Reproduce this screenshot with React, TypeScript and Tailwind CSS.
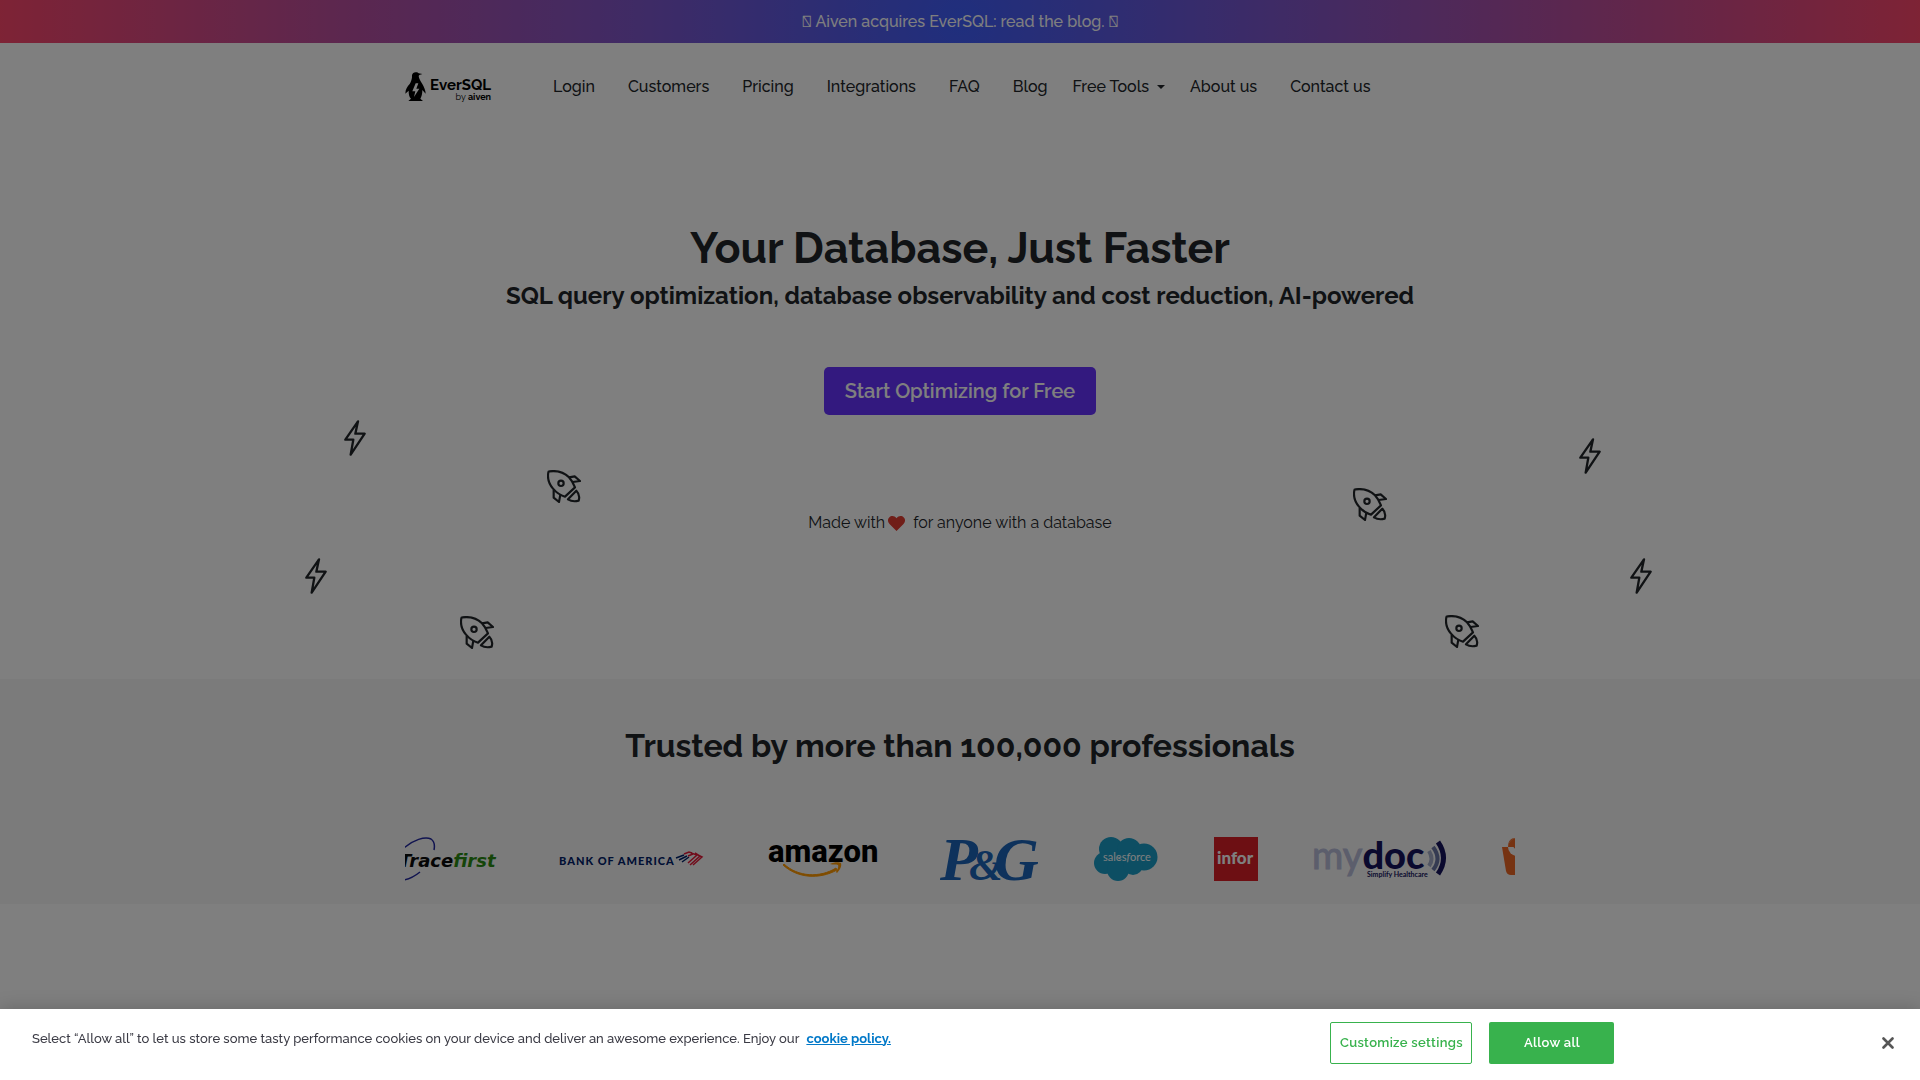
import type { ReactNode } from "react";

function NavItem({ children }: { children: ReactNode }) {
  return (
    <li>
      <a href="#" className="block px-4 py-2">
        {children}
      </a>
    </li>
  );
}

function EverSqlLogo() {
  return (
    <a href="#" aria-label="EverSQL by aiven" className="flex w-[86px] items-center justify-between text-black">
      <svg viewBox="0 0 63 87" className="h-[29px] w-[21px]">
        <path
          fill="#000"
          d="M21 10C22 3 28 0 34 1c4 0 6 2 7 3l11 2c-6 2-10 3-11 6 1 8 5 14 11 24 4 8 10 18 10 29L52 54c0 12-2 20-6 26l8 7H10l8-7c-6-6-7-14-7-24L1 65C1 52 8 42 14 36c4-6 8-16 7-26Z"
        />
        <path fill="#fff" d="M32 34 22 58h9l-4 17 16-25h-9l6-16Z" />
      </svg>
      <span className="mt-[6px] flex flex-col items-end">
        <span className="text-[15px] leading-4 font-bold">EverSQL</span>
        <span className="text-[9px] leading-[9px]">
          by <b>aiven</b>
        </span>
      </span>
    </a>
  );
}

function Bolt({ place }: { place: string }) {
  return (
    <svg viewBox="0 0 66 108" className={`absolute h-9 w-[22px] ${place}`} aria-hidden="true">
      <path d="M42 4 4 59h24l-8 45 42-63H34Z" fill="none" stroke="#212529" strokeWidth="7" strokeLinejoin="round" />
    </svg>
  );
}

function Rocket({ place }: { place: string }) {
  return (
    <svg viewBox="0 0 102 99" className={`absolute h-[33px] w-[34px] ${place}`} aria-hidden="true">
      <g fill="none" stroke="#212529" strokeWidth="6.500" strokeLinejoin="round">
        <path d="M7 4c23-3 45 4 59 18 8 9 14 20 18 30L54 80C40 76 28 68 18 56 6 42 1 23 4 7q0-3 3-3Z" />
        <circle cx="42" cy="40" r="8" />
        <path d="m66 22 17-3 16 14-22 3M20 60v23l16 13 4-22" />
        <path d="M88 62c8 8 10 20 7 30-11 3-23 2-32-4Z" />
      </g>
    </svg>
  );
}

function TraceFirst() {
  return (
    <svg viewBox="0 0 96 44" className="h-11 w-24 shrink-0 overflow-visible" role="img" aria-label="TraceFirst">
      <path d="M-1 11C8 3 20-1 26 2c3 2 4 6 3 11M-1 43c6-1 11-4 16-8" fill="none" stroke="#2228a0" strokeWidth="1.500" />
      <text x="-6" y="30" className="font-['DejaVu_Sans',sans-serif] text-[18px] font-bold italic" fill="#0a0a0a">
        Trace<tspan fill="#2a8a12">first</tspan>
      </text>
    </svg>
  );
}

function BankOfAmerica() {
  return (
    <svg viewBox="0 0 155 44" className="h-11 w-[155px] shrink-0" role="img" aria-label="Bank of America">
      <text x="2" y="28" className="font-['Lato',sans-serif] text-[11px] font-black tracking-[1px]" fill="#012169">
        BANK OF AMERICA
      </text>
      <g fill="none" strokeWidth="1.500">
        <path d="m119 21 8-3M122 23l8-4M125 25l7-5" stroke="#012169" />
        <path d="m127 17 5-2 3 1M131 19l5-2" stroke="#e31837" />
        <path d="m134 16 6 2-9 8M138 16l5 3-10 9M141 18l4 2-9 8" stroke="#e31837" />
      </g>
    </svg>
  );
}

function Amazon() {
  return (
    <svg viewBox="0 0 114 44" className="h-11 w-[114px] shrink-0 overflow-visible" role="img" aria-label="amazon">
      <text x="0" y="25" className="font-['Roboto',sans-serif] text-[31px] font-extrabold" fill="#000">
        amazon
      </text>
      <path d="M16 27c14 13 36 14 52 4l1 2c-18 10-40 8-54-5Z" fill="#f90" stroke="#f90" />
      <path d="M62 27c4-2 9-2 11-1 1 3-1 7-4 10l-1-1c1-2 3-5 2-7-2-1-5 0-8-1Z" fill="#f90" />
    </svg>
  );
}

function ProcterGamble() {
  return (
    <svg viewBox="0 0 100 44" className="h-11 w-[100px] shrink-0 overflow-visible" role="img" aria-label="P&G">
      <text x="2" y="43" className="font-['Liberation_Serif',serif] text-[62px] font-bold italic" fill="#1c64b8">
        P
        <tspan dx="-9" className="text-[44px]">
          &amp;
        </tspan>
        <tspan dx="-9">G</tspan>
      </text>
    </svg>
  );
}

function Salesforce() {
  return (
    <svg viewBox="0 0 64 44" className="h-11 w-16 shrink-0" role="img" aria-label="salesforce">
      <g fill="#1a9cc6">
        <circle cx="17" cy="12" r="12" />
        <circle cx="35" cy="13" r="12" />
        <circle cx="50" cy="20" r="13.500" />
        <circle cx="11" cy="26" r="11" />
        <circle cx="24" cy="33" r="11" />
        <circle cx="39" cy="28" r="10" />
      </g>
      <text x="9" y="24" className="font-['Lato',sans-serif] text-[11px]" fill="#fff">
        sales<tspan fontStyle="italic">f</tspan>orce
      </text>
    </svg>
  );
}

function Infor() {
  return (
    <svg viewBox="0 0 44 44" className="size-11 shrink-0" role="img" aria-label="infor">
      <path d="M0 0h44v44H0z" fill="#da1f26" />
      <text x="3" y="27" className="font-['Lato',sans-serif] text-[17px] font-black" fill="#fff">
        infor
      </text>
    </svg>
  );
}

function MyDoc() {
  return (
    <svg viewBox="0 0 132 44" className="h-11 w-[132px] shrink-0 overflow-visible" role="img" aria-label="mydoc Simplify Healthcare">
      <text x="-2" y="32" className="font-['Lato',sans-serif] text-[38px]" fill="#b8bcd8" stroke="#b8bcd8">
        my
        <tspan className="font-black" fill="#14135c" stroke="none">
          doc
        </tspan>
      </text>
      <text x="53" y="40" className="font-['Lato',sans-serif] text-[7px] font-bold" fill="#14135c">
        Simplify Healthcare
      </text>
      <g fill="none">
        <path d="M115 14q5 8 0 15" stroke="#a4adc8" strokeWidth="4" />
        <path d="M119 10q9 12 0 23" stroke="#6a76a4" strokeWidth="4" />
        <path d="M124 5q11 16 0 32" stroke="#14135c" strokeWidth="5" />
      </g>
    </svg>
  );
}

function OrangeCup() {
  return (
    <svg viewBox="0 0 40 44" className="h-11 w-10 shrink-0" aria-hidden="true">
      <path d="M0 10h6C6 4 9 1 13 1h14c4 0 7 3 7 9h6l-4 24q-1 4-5 4H9q-4 0-5-4Z" fill="#ec6624" />
      <circle cx="15" cy="10" r="9" fill="#f7f7f7" />
      <path d="M6 10a9 9 0 0 1 9-9v9Z" fill="#ec6624" />
      <circle cx="15" cy="8" r="4" fill="#ec6624" />
    </svg>
  );
}

export default function App() {
  return (
    <div className="relative min-h-screen overflow-hidden bg-white font-['Raleway','Lato',sans-serif] text-base text-[#212529]">
      <div className="flex h-[43px] items-center justify-center bg-[radial-gradient(circle,#3f5efb_0%,#fc466b_100%)]">
        <a href="#" className="font-medium text-white">
          {"\uE8FF Aiven acquires EverSQL: read the blog. \uE8FF"}
        </a>
      </div>

      <header className="mx-auto flex h-[87px] max-w-[1140px] items-center px-[15px]">
        <EverSqlLogo />
        <nav className="ml-[46px] font-medium">
          <ul className="flex items-center gap-px whitespace-nowrap">
            <NavItem>Login</NavItem>
            <NavItem>Customers</NavItem>
            <NavItem>Pricing</NavItem>
            <NavItem>Integrations</NavItem>
            <NavItem>FAQ</NavItem>
            <NavItem>Blog</NavItem>
            <li>
              <button type="button" className="flex items-center gap-2 px-2 py-2">
                Free Tools
                <span className="border-x-4 border-t-4 border-x-transparent border-t-current" />
              </button>
            </li>
            <NavItem>About us</NavItem>
            <NavItem>Contact us</NavItem>
          </ul>
        </nav>
      </header>

      <section className="relative flex h-[549px] flex-col items-center pt-[92px] text-center">
        <h1 className="text-[43px] leading-[52px] font-bold">Your Database, Just Faster</h1>
        <h2 className="mt-2 text-2xl leading-7 font-bold">
          SQL query optimization, database observability and cost reduction, AI-powered
        </h2>
        <a
          href="#"
          className="mt-[57px] flex h-12 w-[272px] items-center justify-center rounded-[5px] bg-[#6633ff] text-xl font-semibold text-white"
        >
          Start Optimizing for Free
        </a>
        <p className="mt-24 flex items-center">
          Made with
          <svg viewBox="0 0 17 15" className="mr-2 ml-[3px] h-[15px] w-[17px]" role="img" aria-label="love">
            <path d="M8.500 15 1.500 8C-.5 6-.5 3 1.200 1.400 3.200-.5 6.500-.4 8.500 2.200c2-2.600 5.300-2.700 7.300-.8C17.500 3 17.500 6 15.500 8Z" fill="#e03c31" />
          </svg>
          for anyone with a database
        </p>
        <Bolt place="left-[17.900%] top-[290px]" />
        <Rocket place="left-[28.500%] top-[340px]" />
        <Bolt place="left-[15.900%] top-[428px]" />
        <Rocket place="left-[23.950%] top-[486px]" />
        <Bolt place="right-[16.600%] top-[308px]" />
        <Rocket place="right-[27.750%] top-[358px]" />
        <Bolt place="right-[13.950%] top-[428px]" />
        <Rocket place="right-[22.950%] top-[485px]" />
      </section>

      <section className="bg-[#f7f7f7] pt-12 pb-[23px]">
        <h2 className="text-center text-[32px] leading-[38px] font-bold">Trusted by more than 100,000 professionals</h2>
        <div className="mx-auto mt-[72px] max-w-[1140px] px-[15px]">
          <div className="flex gap-14 overflow-x-clip">
            <TraceFirst />
            <BankOfAmerica />
            <Amazon />
            <ProcterGamble />
            <Salesforce />
            <Infor />
            <MyDoc />
            <OrangeCup />
          </div>
        </div>
      </section>

      <div className="pointer-events-none fixed inset-0 bg-black/50" />

      <div
        role="dialog"
        aria-label="Cookie preferences"
        className="fixed inset-x-0 bottom-0 flex h-[71px] items-center bg-white pr-5 pb-1 pl-8 text-[13px] shadow-[0_0_18px_rgba(0,0,0,0.2)]"
      >
        <p className="mb-2 flex-1 leading-5 font-medium text-[#3a3a44]">
          Select “Allow all” to let us store some tasty performance cookies on your device and deliver an awesome
          experience. Enjoy our{" "}
          <a href="#" className="ml-1 font-bold text-[#0078c8] underline">
            cookie policy.
          </a>
        </p>
        <div className="mr-[14%] flex gap-[17px] font-semibold tracking-wide">
          <button type="button" className="h-[42px] w-[142px] rounded-xs border border-[#38b24d] text-[#38b24d]">
            Customize settings
          </button>
          <button type="button" className="h-[42px] w-[125px] rounded-xs bg-[#38b24d] text-white">
            Allow all
          </button>
        </div>
        <button type="button" aria-label="Close" className="flex size-6 items-center justify-center">
          <svg viewBox="0 0 12 12" className="size-3">
            <path d="m1.500 1.500 9 9m0-9-9 9" stroke="#565656" strokeWidth="2.600" strokeLinecap="round" />
          </svg>
        </button>
      </div>
    </div>
  );
}
